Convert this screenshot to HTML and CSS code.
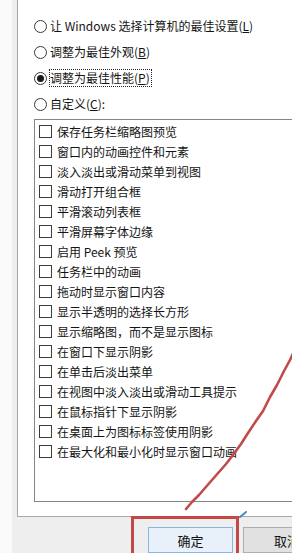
FILE: index.html
```html
<!DOCTYPE html>
<html lang="zh-CN">
<head>
<meta charset="utf-8">
<link rel="stylesheet" href="styles.css">
</head>
<body>
<div class="page">
  <div class="edge"></div>
  <div class="main">
    <div class="panel">
      <div class="radios">
        <div class="radio-row"><span class="radio"></span><span class="label">让 Windows 选择计算机的最佳设置(<u>L</u>)</span></div>
        <div class="radio-row"><span class="radio"></span><span class="label">调整为最佳外观(<u>B</u>)</span></div>
        <div class="radio-row"><span class="radio checked"></span><span class="label focus">调整为最佳性能(<u>P</u>)</span></div>
        <div class="radio-row"><span class="radio"></span><span class="label">自定义(<u>C</u>):</span></div>
      </div>
      <div class="listbox">
        <div class="item"><span class="box"></span><span>保存任务栏缩略图预览</span></div>
        <div class="item"><span class="box"></span><span>窗口内的动画控件和元素</span></div>
        <div class="item"><span class="box"></span><span>淡入淡出或滑动菜单到视图</span></div>
        <div class="item"><span class="box"></span><span>滑动打开组合框</span></div>
        <div class="item"><span class="box"></span><span>平滑滚动列表框</span></div>
        <div class="item"><span class="box"></span><span>平滑屏幕字体边缘</span></div>
        <div class="item"><span class="box"></span><span>启用 Peek 预览</span></div>
        <div class="item"><span class="box"></span><span>任务栏中的动画</span></div>
        <div class="item"><span class="box"></span><span>拖动时显示窗口内容</span></div>
        <div class="item"><span class="box"></span><span>显示半透明的选择长方形</span></div>
        <div class="item"><span class="box"></span><span>显示缩略图，而不是显示图标</span></div>
        <div class="item"><span class="box"></span><span>在窗口下显示阴影</span></div>
        <div class="item"><span class="box"></span><span>在单击后淡出菜单</span></div>
        <div class="item"><span class="box"></span><span>在视图中淡入淡出或滑动工具提示</span></div>
        <div class="item"><span class="box"></span><span>在鼠标指针下显示阴影</span></div>
        <div class="item"><span class="box"></span><span>在桌面上为图标标签使用阴影</span></div>
        <div class="item"><span class="box"></span><span>在最大化和最小化时显示窗口动画</span></div>
      </div>
    </div>
    <div class="buttons">
      <div class="btn primary">确定</div>
      <div class="btn">取消</div>
    </div>
  </div>
  <div class="mark-rect"></div>
  <svg class="annot" width="292" height="553" viewBox="0 0 292 553">
    <path d="M296 347 L290 360 L284 371 L277 385 L270 397 L263 411 L256 421 L248 433 L241 444 L233 455 L226 464 L219 472 L212 480 L205 488 L199 495 L192 502 L186 509" fill="none" stroke="#c24a4a" stroke-width="2.6" stroke-linecap="round" stroke-linejoin="round"/>
    <path d="M240 517 L246 512" stroke="#3d8cc4" stroke-width="2" stroke-linecap="round"/>
  </svg>
</div>
</body>
</html>
```

FILE: styles.css
```css
* { box-sizing: border-box; }
html, body {
  margin: 0;
  padding: 0;
  width: 292px;
  height: 553px;
  overflow: hidden;
}
body {
  font-family: "Noto Sans CJK SC", "Noto Sans", sans-serif;
  font-size: 12px;
  color: #141414;
  background: #f0f0f0;
}
.page {
  position: relative;
  display: flex;
  width: 292px;
  height: 553px;
  overflow: hidden;
}
.edge {
  width: 12px;
  flex: none;
  background: #f9f9f9;
}
.main {
  flex: none;
  width: 300px;
  padding-left: 5px;
  background: #eeeeee;
  display: flex;
  flex-direction: column;
}
.panel {
  height: 519px;
  background: #ffffff;
  border-left: 1px solid #a8a8a8;
  border-bottom: 1px solid #a8a8a8;
  padding: 13px 0 0 16px;
  display: flex;
  flex-direction: column;
}
.radios {
  display: flex;
  flex-direction: column;
}
.radio-row {
  height: 26px;
  display: flex;
  align-items: center;
  white-space: nowrap;
}
.radio {
  width: 13px;
  height: 13px;
  border: 1px solid #3a3a3a;
  border-radius: 50%;
  margin-right: 3px;
  flex: none;
  display: flex;
  align-items: center;
  justify-content: center;
}
.radio.checked::after {
  content: "";
  width: 7px;
  height: 7px;
  border-radius: 50%;
  background: #1a1a1a;
}
.label {
  line-height: 16px;
}
.label u {
  text-decoration-thickness: 1px;
  text-underline-offset: 1px;
}
.focus {
  outline: 1px dotted #222;
  padding: 0 1px 0 0;
}
.listbox {
  margin-top: 2px;
  height: 383px;
  width: 300px;
  border: 1px solid #858585;
  padding: 1px 0 0 4px;
  display: flex;
  flex-direction: column;
}
.item {
  height: 20px;
  display: flex;
  align-items: center;
  white-space: nowrap;
}
.box {
  width: 13px;
  height: 13px;
  border: 1px solid #3c3c3c;
  margin-right: 5px;
  flex: none;
}
.buttons {
  display: flex;
  gap: 10px;
  padding-left: 131px;
  margin-top: 10px;
}
.btn {
  flex: none;
  width: 85px;
  height: 26px;
  border: 1px solid #adadad;
  background: #e1e1e1;
  font-size: 13px;
  display: flex;
  justify-content: center;
  padding-top: 3px;
  color: #111;
}
.btn.primary {
  border-color: #86b6e3;
  background: #e8f1fa;
}
.btn:not(.primary) {
  justify-content: flex-start;
  padding-left: 30px;
}
.mark-rect {
  position: absolute;
  left: 131px;
  top: 516px;
  width: 108px;
  height: 50px;
  border: 3px solid #c34848;
}
.annot {
  position: absolute;
  left: 0;
  top: 0;
}
```
